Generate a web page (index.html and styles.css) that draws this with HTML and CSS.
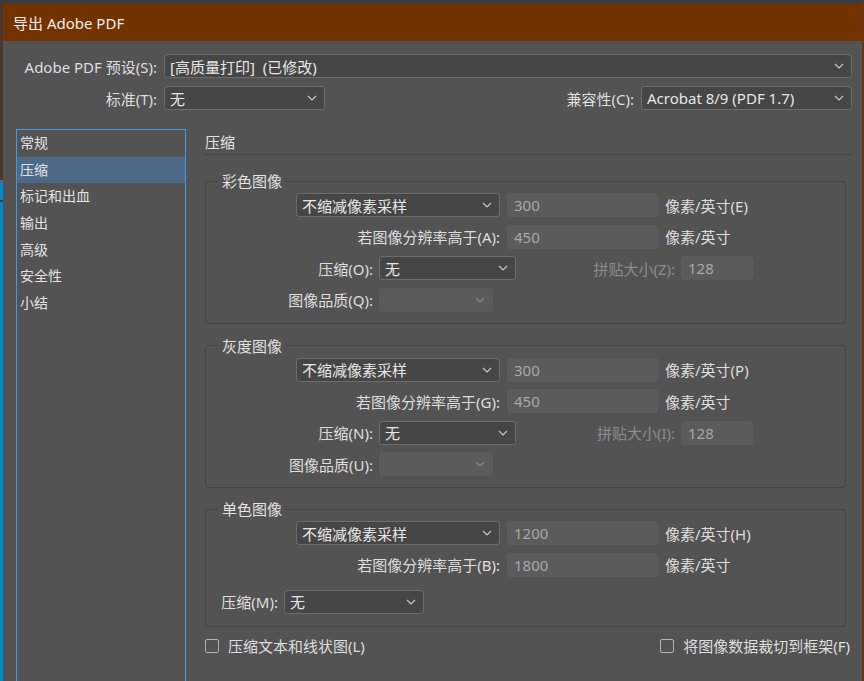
FILE: index.html
```html
<!DOCTYPE html>
<html lang="zh-CN">
<head>
<meta charset="utf-8">
<title>导出 Adobe PDF</title>
<link rel="stylesheet" href="styles.css">
</head>
<body>
<div class="screen">
  <div class="edge-left"></div>
  <div class="dialog">
    <div class="titlebar">导出 Adobe PDF</div>

    <div class="top-row">
      <span class="lbl-top">Adobe PDF 预设(S):</span>
      <div class="select grow"><span class="val">[高质量打印]&nbsp; (已修改)</span><svg class="chev" width="10" height="6" viewBox="0 0 10 6"><path d="M1 1 L5 5 L9 1" /></svg></div>
    </div>
    <div class="top-row">
      <span class="lbl-top">标准(T):</span>
      <div class="select w-std"><span class="val">无</span><svg class="chev" width="10" height="6" viewBox="0 0 10 6"><path d="M1 1 L5 5 L9 1" /></svg></div>
      <span class="spacer"></span>
      <span class="lbl-compat">兼容性(C):</span>
      <div class="select w-compat"><span class="val">Acrobat 8/9 (PDF 1.7)</span><svg class="chev" width="10" height="6" viewBox="0 0 10 6"><path d="M1 1 L5 5 L9 1" /></svg></div>
    </div>

    <div class="main">
      <ul class="nav">
        <li>常规</li>
        <li class="active">压缩</li>
        <li>标记和出血</li>
        <li>输出</li>
        <li>高级</li>
        <li>安全性</li>
        <li>小结</li>
      </ul>

      <div class="panel">
        <div class="heading">压缩</div>

        <fieldset class="group g-color">
          <legend>彩色图像</legend>
          <div class="row">
            <div class="select w-sample"><span class="val">不缩减像素采样</span><svg class="chev" width="10" height="6" viewBox="0 0 10 6"><path d="M1 1 L5 5 L9 1" /></svg></div>
            <div class="field w-res">300</div>
            <span class="unit">像素/英寸(E)</span>
          </div>
          <div class="row">
            <span class="lbl lbl-above">若图像分辨率高于(A):</span>
            <div class="field w-res">450</div>
            <span class="unit">像素/英寸</span>
          </div>
          <div class="row">
            <span class="lbl lbl-comp">压缩(O):</span>
            <div class="select w-comp"><span class="val">无</span><svg class="chev" width="10" height="6" viewBox="0 0 10 6"><path d="M1 1 L5 5 L9 1" /></svg></div>
            <span class="lbl lbl-tile dim">拼贴大小(Z):</span>
            <div class="field w-tile">128</div>
          </div>
          <div class="row">
            <span class="lbl lbl-comp">图像品质(Q):</span>
            <div class="select disabled w-qual"><span class="val"></span><svg class="chev" width="10" height="6" viewBox="0 0 10 6"><path d="M1 1 L5 5 L9 1" /></svg></div>
          </div>
        </fieldset>

        <fieldset class="group g-gray">
          <legend>灰度图像</legend>
          <div class="row">
            <div class="select w-sample"><span class="val">不缩减像素采样</span><svg class="chev" width="10" height="6" viewBox="0 0 10 6"><path d="M1 1 L5 5 L9 1" /></svg></div>
            <div class="field w-res">300</div>
            <span class="unit">像素/英寸(P)</span>
          </div>
          <div class="row">
            <span class="lbl lbl-above">若图像分辨率高于(G):</span>
            <div class="field w-res">450</div>
            <span class="unit">像素/英寸</span>
          </div>
          <div class="row">
            <span class="lbl lbl-comp">压缩(N):</span>
            <div class="select w-comp"><span class="val">无</span><svg class="chev" width="10" height="6" viewBox="0 0 10 6"><path d="M1 1 L5 5 L9 1" /></svg></div>
            <span class="lbl lbl-tile dim">拼贴大小(I):</span>
            <div class="field w-tile">128</div>
          </div>
          <div class="row">
            <span class="lbl lbl-comp">图像品质(U):</span>
            <div class="select disabled w-qual"><span class="val"></span><svg class="chev" width="10" height="6" viewBox="0 0 10 6"><path d="M1 1 L5 5 L9 1" /></svg></div>
          </div>
        </fieldset>

        <fieldset class="group g-mono">
          <legend>单色图像</legend>
          <div class="row">
            <div class="select w-sample"><span class="val">不缩减像素采样</span><svg class="chev" width="10" height="6" viewBox="0 0 10 6"><path d="M1 1 L5 5 L9 1" /></svg></div>
            <div class="field w-res">1200</div>
            <span class="unit">像素/英寸(H)</span>
          </div>
          <div class="row">
            <span class="lbl lbl-above">若图像分辨率高于(B):</span>
            <div class="field w-res">1800</div>
            <span class="unit">像素/英寸</span>
          </div>
          <div class="row row-mono-comp">
            <span class="lbl lbl-mono">压缩(M):</span>
            <div class="select w-mono"><span class="val">无</span><svg class="chev" width="10" height="6" viewBox="0 0 10 6"><path d="M1 1 L5 5 L9 1" /></svg></div>
          </div>
        </fieldset>

        <div class="checks">
          <label class="check"><span class="box"></span>压缩文本和线状图(L)</label>
          <label class="check"><span class="box"></span>将图像数据裁切到框架(F)</label>
        </div>
      </div>
    </div>
  </div>
</div>
</body>
</html>
```

FILE: styles.css
```css
* { box-sizing: border-box; }

html, body {
  margin: 0;
  padding: 0;
}

body {
  width: 864px;
  height: 681px;
  overflow: hidden;
  background: #535353;
  font-family: "Noto Sans", "Noto Sans CJK SC", sans-serif;
  font-size: 15px;
  color: #dedede;
}

.screen {
  display: flex;
  height: 681px;
}

.edge-left {
  width: 3px;
  flex: none;
  background: linear-gradient(to bottom,
    #3c3c3c 0 4px,
    #4b382c 4px 180px,
    #c0504d 180px 181px,
    #0a87cb 181px 200px,
    #33404a 200px 202px,
    #0a87cb 202px);
}

.dialog {
  flex: 1;
  min-width: 0;
  display: flex;
  flex-direction: column;
  border-top: 4px solid #3c3c3c;
  border-right: 2px solid #6e3410;
}

.titlebar {
  height: 37px;
  flex: none;
  display: flex;
  align-items: center;
  padding-left: 10px;
  background: #733300;
  color: #ececec;
  font-size: 15px;
}

/* top rows */
.top-row {
  display: flex;
  align-items: center;
  height: 24px;
  margin-right: 10px;
  flex: none;
}
.titlebar + .top-row { margin-top: 13px; }
.top-row + .top-row { margin-top: 8px; }

.lbl-top {
  width: 154px;
  text-align: right;
  margin-right: 7px;
  white-space: nowrap;
}
.lbl-compat {
  margin-right: 7px;
  white-space: nowrap;
}
.spacer { flex: 1; }

/* select */
.select {
  height: 24px;
  display: flex;
  align-items: center;
  background: #464646;
  border: 1px solid #6c6c6c;
  border-radius: 3px;
  padding-left: 5px;
  padding-right: 7px;
  flex: none;
}
.select .val {
  flex: 1;
  white-space: nowrap;
  overflow: hidden;
  color: #e6e6e6;
}
.chev path {
  fill: none;
  stroke: #c8c8c8;
  stroke-width: 1.2;
}
.select.disabled {
  background: #5b5b5b;
  border-color: #5b5b5b;
}
.select.disabled .chev path { stroke: #8a8a8a; }

.grow { flex: 1; }
.w-std { width: 161px; }
.w-compat { width: 211px; }
.w-sample { width: 204px; margin-left: 90px; }
.w-comp { width: 137px; }
.w-qual { width: 114px; }
.w-mono { width: 140px; }

/* disabled text field */
.field {
  height: 24px;
  display: flex;
  align-items: center;
  padding-left: 7px;
  background: #5b5b5b;
  border-radius: 3px;
  color: #a8a8a8;
  flex: none;
}
.w-res { width: 151px; margin-left: 7px; }
.w-tile { width: 72px; margin-left: 6px; }

.unit {
  margin-left: 7px;
  white-space: nowrap;
}

/* main */
.main {
  flex: 1;
  display: flex;
  margin-top: 19px;
  min-height: 0;
}

.nav {
  list-style: none;
  margin: 0 0 0 13px;
  padding: 0;
  width: 170px;
  flex: none;
  border: 1px solid #3f9be8;
  border-bottom: none;
  font-size: 14px;
}
.nav li {
  height: 26.67px;
  line-height: 26.67px;
  padding-left: 3px;
  color: #e2e2e2;
}
.nav li.active {
  background: #4c6988;
}

.panel {
  flex: 1;
  margin-left: 18px;
  margin-right: 10px;
  display: flex;
  flex-direction: column;
}

.heading {
  height: 26px;
  padding-top: 3px;
  line-height: 20px;
  padding-left: 1px;
  border-bottom: 1px solid #474747;
  color: #e2e2e2;
}

/* groups */
.group {
  margin: 14px 6px 0 1px;
  padding: 0 0 11px 0;
  border: 1px solid #444444;
  border-radius: 4px;
  min-width: 0;
}
.g-color { margin-top: 18px; }
.g-mono { margin-top: 13px; padding-bottom: 12px; }

.group legend {
  margin-left: 12px;
  padding: 0 4px;
  height: 16px;
  line-height: 16px;
  color: #e2e2e2;
}

.row {
  display: flex;
  align-items: center;
  height: 24px;
  margin-top: 7.5px;
}
.group legend + .row { margin-top: 4px; }
.row.row-mono-comp { margin-top: 13px; }

.lbl {
  text-align: right;
  white-space: nowrap;
  flex: none;
}
.lbl-above { width: 294px; }
.lbl-comp { width: 167px; margin-right: 6px; }
.lbl-tile { width: 159px; }
.lbl-mono { width: 72px; margin-right: 6px; }
.dim { color: #8c8c8c; }

/* checkboxes */
.checks {
  display: flex;
  justify-content: space-between;
  align-items: center;
  height: 20px;
  margin-top: 9px;
  padding-left: 1px;
  padding-right: 2px;
}
.check {
  display: flex;
  align-items: center;
  white-space: nowrap;
}
.box {
  width: 14px;
  height: 14px;
  border: 1px solid #b4b4b4;
  border-radius: 2px;
  margin-right: 9px;
}
```
